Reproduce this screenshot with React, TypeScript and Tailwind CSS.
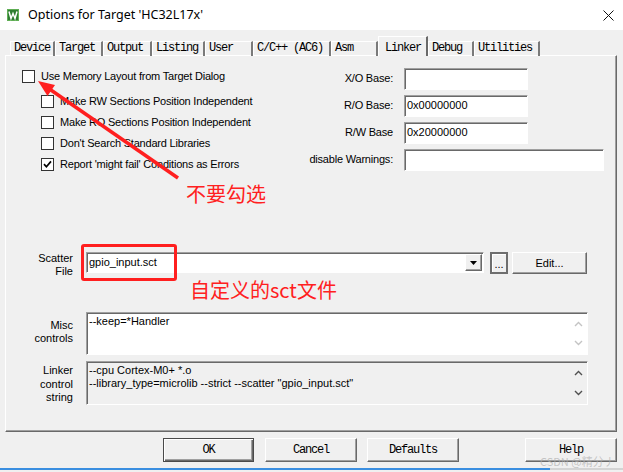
import React from "react";

const sans = { fontFamily: '"Liberation Sans", Arial, sans-serif' };
const mono = { fontFamily: '"Liberation Mono", "Courier New", monospace' };
const cjk = { fontFamily: '"Noto Sans CJK SC", "Noto Sans", sans-serif' };

const tabs = [
  { name: "Device", w: "w-[45px]" },
  { name: "Target", w: "w-[48px]" },
  { name: "Output", w: "w-[49px]" },
  { name: "Listing", w: "w-[53px]" },
  { name: "User", w: "w-[48px]" },
  { name: "C/C++ (AC6)", w: "w-[78px]" },
  { name: "Asm", w: "w-[47px]" },
  { name: "Linker", w: "w-[50px]", active: true },
  { name: "Debug", w: "w-[46px]" },
  { name: "Utilities", w: "w-[66px]" },
];

const CheckBox = ({ checked }: { checked?: boolean }) => (
  <span className="w-[13px] h-[13px] shrink-0 border border-[#333] bg-white flex items-center justify-center">
    {checked && (
      <svg width="9" height="9" viewBox="0 0 9 9">
        <path d="M1 4.2 L3.4 6.8 L8 1.4" stroke="#000" strokeWidth="1.7" fill="none" />
      </svg>
    )}
  </span>
);

const Option = ({ label, checked, first }: { label: string; checked?: boolean; first?: boolean }) => (
  <div className={`flex items-center gap-[6px] h-[13px] ${first ? "" : "ml-[19px]"}`}>
    <CheckBox checked={checked} />
    <span className="text-[11px] leading-[13px] tracking-[-0.2px] text-black whitespace-nowrap">{label}</span>
  </div>
);

const sunken =
  "border border-t-[#a0a0a0] border-l-[#a0a0a0] border-r-white border-b-white shadow-[inset_1px_1px_0_#696969]";
const raised =
  "border border-t-white border-l-white border-r-[#696969] border-b-[#696969] shadow-[inset_-1px_-1px_0_#a0a0a0] bg-[#f0f0f0]";

const Field = ({ value, w }: { value?: string; w: string }) => (
  <div className={`${w} h-[22px] bg-white ${sunken} px-[2px] text-[11px] leading-[18px] text-black`}>
    {value}
  </div>
);

const Chevron = ({ up, color }: { up?: boolean; color: string }) => (
  <svg width="9" height="6" viewBox="0 0 9 6">
    <path d={up ? "M1 5 L4.5 1.5 L8 5" : "M1 1 L4.5 4.5 L8 1"} stroke={color} strokeWidth="1.4" fill="none" />
  </svg>
);

const Button = ({ label, w, def }: { label: string; w: string; def?: boolean }) => (
  <div
    className={`${w} h-[24px] flex items-center justify-center text-[12px] tracking-[-1.2px] text-black ${
      def
        ? "border border-[#4a4a4a] shadow-[inset_1px_1px_0_#fff,inset_-1px_-1px_0_#696969,inset_-2px_-2px_0_#a0a0a0] bg-[#f0f0f0]"
        : raised
    }`}
    style={mono}
  >
    {label}
  </div>
);

export default function App() {
  return (
    <div className="relative w-[623px] h-[472px] overflow-hidden bg-[#f0f0f0]" style={sans}>
      {/* title bar */}
      <div className="h-[30px] bg-white flex items-center pl-[7px] pr-[9px]">
        <svg width="12" height="12" viewBox="0 0 12 12" className="shrink-0">
          <rect width="12" height="12" fill="#2f7d32" />
          <rect x="0.5" y="0.5" width="11" height="11" fill="none" stroke="#5fae54" />
          <path d="M2 2.5 L4 9.5 L6 4.5 L8 9.5 L10 2.5" stroke="#fff" strokeWidth="1.5" fill="none" />
        </svg>
        <span className="ml-[9px] text-[12.5px] text-black" style={{ fontFamily: '"Noto Sans", sans-serif' }}>
          Options for Target 'HC32L17x'
        </span>
        <svg width="11" height="11" viewBox="0 0 11 11" className="ml-auto">
          <path d="M0.5 0.5 L10.5 10.5 M10.5 0.5 L0.5 10.5" stroke="#111" strokeWidth="1" />
        </svg>
      </div>

      {/* tab strip */}
      <div className="mt-[6px] h-[20px] pl-[10px] flex items-end relative z-10">
        {tabs.map((t) =>
          t.active ? (
            <div
              key={t.name}
              className={`${t.w} h-[20px] bg-[#f0f0f0] border-t border-l border-t-white border-l-white border-r-2 border-r-[#696969] pl-[6px] pt-[2px] text-[12px] tracking-[-1.2px] text-black`}
              style={mono}
            >
              {t.name}
            </div>
          ) : (
            <div
              key={t.name}
              className={`${t.w} h-[15px] border-t border-l border-t-white border-l-white border-r-2 border-r-[#7a7a7a] pl-[3px] text-[12px] leading-[13px] tracking-[-1.2px] text-black whitespace-nowrap overflow-hidden`}
              style={mono}
            >
              {t.name}
            </div>
          )
        )}
      </div>

      {/* linker page */}
      <div className="ml-[5px] mt-[-1px] w-[612px] h-[377px] border border-t-white border-l-white border-r-[#696969] border-b-[#696969] shadow-[inset_-1px_-1px_0_#a0a0a0]">
        <div className="flex">
          <div className="ml-[16px] w-[283px] pt-[14px] flex flex-col">
            <Option first label="Use Memory Layout from Target Dialog" />
            <div className="mt-[12px] flex flex-col gap-[8px]">
              <Option label="Make RW Sections Position Independent" />
              <Option label="Make RO Sections Position Independent" />
              <Option label="Don't Search Standard Libraries" />
              <Option checked label="Report 'might fail' Conditions as Errors" />
            </div>
          </div>
          <div className="pt-[11px] grid grid-cols-[88px_auto] gap-x-[11px] gap-y-[4px] items-center">
            <span className="text-right text-[11px] tracking-[-0.2px] whitespace-nowrap">X/O Base:</span>
            <Field w="w-[124px]" />
            <span className="text-right text-[11px] tracking-[-0.2px] whitespace-nowrap">R/O Base:</span>
            <Field w="w-[124px]" value="0x00000000" />
            <span className="text-right text-[11px] tracking-[-0.2px] whitespace-nowrap">R/W Base</span>
            <Field w="w-[124px]" value="0x20000000" />
            <span className="text-right text-[11px] tracking-[-0.2px] whitespace-nowrap">disable Warnings:</span>
            <Field w="w-[200px]" />
          </div>
        </div>

        {/* scatter file */}
        <div className="mt-[81px] flex items-start">
          <div className="w-[67px] text-right text-[11px] leading-[13px]">
            Scatter
            <br />
            File
          </div>
          <div className={`ml-[13px] w-[398px] h-[21px] bg-white ${sunken} flex items-center`}>
            <span className="flex-1 pl-[2px] text-[11px] text-black">gpio_input.sct</span>
            <div className={`w-[17px] h-[17px] mr-px ${raised} flex items-center justify-center`}>
              <svg width="7" height="4" viewBox="0 0 7 4">
                <path d="M0 0 H7 L3.5 4 Z" fill="#000" />
              </svg>
            </div>
          </div>
          <div className="ml-[6px] w-[18px] h-[22px] border-2 border-[#6e6e6e] shadow-[inset_1px_1px_0_#fff] flex items-end justify-center pb-[3px] text-[11px] leading-[10px]">
            ...
          </div>
          <div className={`ml-[4px] w-[75px] h-[22px] ${raised} flex items-center justify-center text-[11px]`}>
            Edit...
          </div>
        </div>

        {/* misc controls */}
        <div className="mt-[34px] flex items-start">
          <div className="w-[67px] pt-[7px] text-right text-[11px] leading-[13px]">
            Misc
            <br />
            controls
          </div>
          <div className={`ml-[13px] w-[502px] h-[43px] bg-white ${sunken} flex`}>
            <div className="flex-1 pl-[2px] pt-[2px] text-[11px] leading-[13px]">--keep=*Handler</div>
            <div className="w-[17px] flex flex-col items-center justify-between py-[8px]">
              <Chevron up color="#c4c4c4" />
              <Chevron color="#c4c4c4" />
            </div>
          </div>
        </div>

        {/* linker control string */}
        <div className="mt-[6px] flex items-start">
          <div className="w-[67px] pt-[3px] text-right text-[11px] leading-[13.5px]">
            Linker
            <br />
            control
            <br />
            string
          </div>
          <div className={`ml-[13px] w-[502px] h-[44px] bg-[#f0f0f0] ${sunken} flex`}>
            <div className="flex-1 pl-[2px] pt-[2px] text-[11px] leading-[13px] whitespace-nowrap">
              --cpu Cortex-M0+ *.o
              <br />
              --library_type=microlib --strict --scatter "gpio_input.sct"
            </div>
            <div className="w-[17px] flex flex-col items-center justify-between py-[8px]">
              <Chevron up color="#505050" />
              <Chevron color="#505050" />
            </div>
          </div>
        </div>
      </div>

      {/* dialog buttons */}
      <div className="mt-[6px] flex">
        <div className="ml-[163px]">
          <Button def label="OK" w="w-[91px]" />
        </div>
        <div className="ml-[11px]">
          <Button label="Cancel" w="w-[92px]" />
        </div>
        <div className="ml-[10px]">
          <Button label="Defaults" w="w-[92px]" />
        </div>
        <div className="ml-[66px]">
          <Button label="Help" w="w-[92px]" />
        </div>
      </div>
      <div className="mt-[6px] flex h-[2px]">
        <div className="w-[550px] bg-[#3a8ee0]" />
        <div className="flex-1 bg-[#d4d4d4]" />
      </div>

      {/* red notes drawn over the dialog */}
      <svg className="absolute left-0 top-0 pointer-events-none" width="623" height="472">
        <line x1="178" y1="178" x2="48" y2="88" stroke="#ff1f1f" strokeWidth="3.5" />
        <polygon points="38,81 55,85 47.5,96" fill="#ff1f1f" />
      </svg>
      <div className="absolute left-[81px] top-[244px] w-[96px] h-[37px] border-[3px] border-[#ff1f1f] rounded-[3px]" />
      <div className="absolute left-[186px] top-[182px] text-[20px] leading-[24px] text-[#ff2020]" style={cjk}>
        不要勾选
      </div>
      <div className="absolute left-[190px] top-[278px] text-[20px] leading-[24px] text-[#ff2020]" style={cjk}>
        自定义的sct文件
      </div>
      <div className="absolute left-[540px] top-[455px] text-[11px] leading-[12px] text-[#b0b0b0]/70" style={cjk}>
        CSDN @精分丿
      </div>
    </div>
  );
}
